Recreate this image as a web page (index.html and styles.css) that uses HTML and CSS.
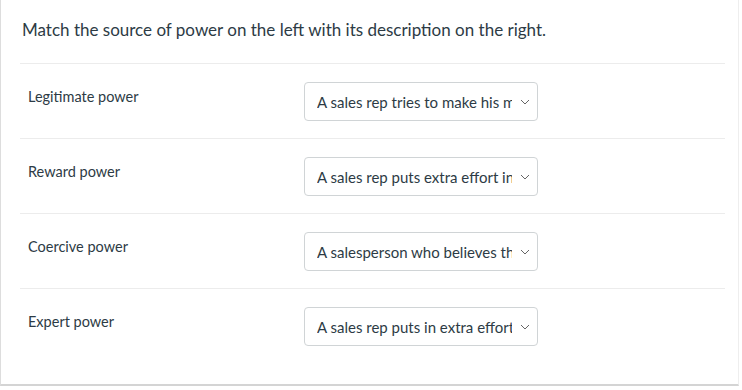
FILE: index.html
```html
<!DOCTYPE html>
<html>
<head>
  <title>Matching Question</title>
  <link rel="stylesheet" href="styles.css">
</head>
<body>

  <div class="question">
    <p class="prompt">Match the source of power on the left with its description on the right.</p>

    <div class="match-row">
      <div class="label">Legitimate power</div>
      <div class="select-box">
        <span class="select-text">A sales rep tries to make his most</span>
        <svg class="chevron" width="10" height="6" viewBox="0 0 10 6"><path d="M1 1l4 4 4-4" fill="none" stroke="#666" stroke-width="1"/></svg>
      </div>
    </div>

    <div class="match-row">
      <div class="label">Reward power</div>
      <div class="select-box">
        <span class="select-text">A sales rep puts extra effort into</span>
        <svg class="chevron" width="10" height="6" viewBox="0 0 10 6"><path d="M1 1l4 4 4-4" fill="none" stroke="#666" stroke-width="1"/></svg>
      </div>
    </div>

    <div class="match-row">
      <div class="label">Coercive power</div>
      <div class="select-box">
        <span class="select-text">A salesperson who believes they</span>
        <svg class="chevron" width="10" height="6" viewBox="0 0 10 6"><path d="M1 1l4 4 4-4" fill="none" stroke="#666" stroke-width="1"/></svg>
      </div>
    </div>

    <div class="match-row">
      <div class="label">Expert power</div>
      <div class="select-box">
        <span class="select-text">A sales rep puts in extra effort</span>
        <svg class="chevron" width="10" height="6" viewBox="0 0 10 6"><path d="M1 1l4 4 4-4" fill="none" stroke="#666" stroke-width="1"/></svg>
      </div>
    </div>
  </div>

</body>
</html>
```

FILE: styles.css
```css
body {
  margin: 0;
  font-family: Lato, "Open Sans", sans-serif;
  background: #fff;
  color: #2d3b45;
}
.question {
  width: 739px;
  height: 386px;
  border-left: 1px solid #ddd;
  border-right: 1px solid #eee;
  border-bottom: 2px solid #d4d4d4;
  padding: 0 13px 0 19px;
  box-sizing: border-box;
}
.prompt {
  margin: 0;
  padding: 18px 0 21px 2px;
  font-size: 17px;
  line-height: 24px;
  border-bottom: 1px solid #ececec;
}
.match-row {
  display: flex;
  align-items: flex-start;
  height: 75px;
  padding: 18px 0 0 8px;
  box-sizing: border-box;
  border-bottom: 1px solid #ececec;
}
.match-row:last-child {
  border-bottom: none;
}
.label {
  width: 276px;
  font-size: 14.5px;
  line-height: 20px;
  padding-top: 5px;
}
.select-box {
  width: 234px;
  height: 39px;
  border: 1px solid #d0d4d6;
  border-radius: 4px;
  box-sizing: border-box;
  display: flex;
  align-items: center;
  padding: 0 7px 0 12px;
  font-size: 15px;
}
.select-text {
  flex: 1;
  white-space: nowrap;
  overflow: hidden;
  margin-right: 8px;
}
.chevron {
  flex-shrink: 0;
}
```
